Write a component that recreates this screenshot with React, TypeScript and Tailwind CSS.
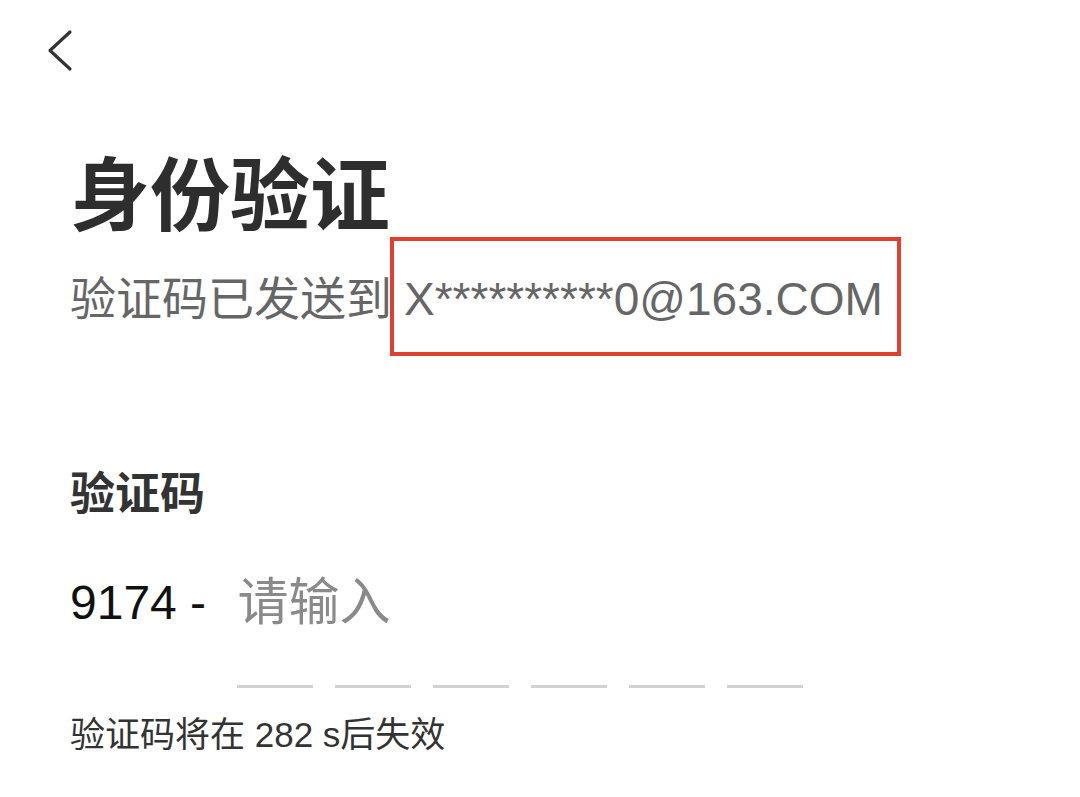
export default function App() {
  const font = { fontFamily: '"Liberation Sans", "Noto Sans CJK SC", sans-serif' };
  return (
    <main className="w-[1080px] h-[797px] bg-white overflow-hidden" style={font}>
      {/* back button */}
      <div className="pt-[25px] pl-[40px] h-[80px]">
        <svg width="40" height="50" viewBox="0 0 40 50" fill="none">
          <path d="M30 7 L10 25.5 L30 44" stroke="#333" strokeWidth="3.2" strokeLinecap="round" strokeLinejoin="round" />
        </svg>
      </div>

      <section className="flex flex-col pl-[70px]">
        <h1 className="mt-[77px] text-[80px] leading-[80px] font-bold text-[#2e2e2e]">身份验证</h1>

        <p className="mt-[39px] text-[46px] leading-[46px] text-[#666] whitespace-nowrap">
          验证码已发送到
          <span className="relative ml-[12px]">
            X**********0@163.COM
            <span className="absolute -left-[14px] -right-[18px] -top-[36px] -bottom-[31px] border-[4px] border-[#e0402d]" />
          </span>
        </p>

        <h2 className="mt-[150px] text-[45px] leading-[45px] font-bold text-[#333]">验证码</h2>

        <div className="mt-[61px] flex items-center h-[50px] whitespace-pre">
          <span className="text-[48px] text-[#111]">9174 - </span>
          <span className="ml-[18px] text-[51px] text-[#8a8a8a]">请输入</span>
        </div>

        <div className="mt-[57px] pl-[167px] flex gap-[22px]">
          {[0, 1, 2, 3, 4, 5].map((i) => (
            <div key={i} className="w-[76px] h-[3px] bg-[#d2d2d2]" />
          ))}
        </div>

        <p className="mt-[29px] text-[35px] leading-[35px] text-[#333]">验证码将在 282 s后失效</p>
      </section>
    </main>
  );
}
